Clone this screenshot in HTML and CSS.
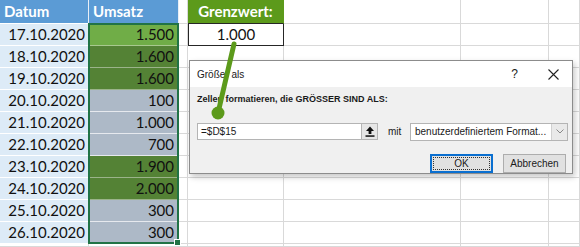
FILE: index.html
```html
<html>
  <head>
    <title>Größer als</title>
    <link rel="stylesheet" href="styles.css">
  </head>
  <body>
    <div class="sheet">
      <div class="cell head">Datum</div>
      <div class="cell head">Umsatz</div>
      <div class="cell"></div>
      <div class="cell head-green">Grenzwert:</div>
      <div class="cell"></div>
      <div class="cell"></div>
      <div class="cell"></div>

      <div class="cell date">17.10.2020</div>
      <div class="cell amount light">1.500</div>
      <div class="cell"></div>
      <div class="cell limit">1.000</div>
      <div class="cell"></div>
      <div class="cell"></div>
      <div class="cell"></div>

      <div class="cell date">18.10.2020</div>
      <div class="cell amount dark">1.600</div>
      <div class="cell"></div><div class="cell"></div><div class="cell"></div><div class="cell"></div><div class="cell"></div>

      <div class="cell date">19.10.2020</div>
      <div class="cell amount dark">1.600</div>
      <div class="cell"></div><div class="cell"></div><div class="cell"></div><div class="cell"></div><div class="cell"></div>

      <div class="cell date">20.10.2020</div>
      <div class="cell amount gray">100</div>
      <div class="cell"></div><div class="cell"></div><div class="cell"></div><div class="cell"></div><div class="cell"></div>

      <div class="cell date">21.10.2020</div>
      <div class="cell amount gray">1.000</div>
      <div class="cell"></div><div class="cell"></div><div class="cell"></div><div class="cell"></div><div class="cell"></div>

      <div class="cell date">22.10.2020</div>
      <div class="cell amount gray">700</div>
      <div class="cell"></div><div class="cell"></div><div class="cell"></div><div class="cell"></div><div class="cell"></div>

      <div class="cell date">23.10.2020</div>
      <div class="cell amount dark">1.900</div>
      <div class="cell"></div><div class="cell"></div><div class="cell"></div><div class="cell"></div><div class="cell"></div>

      <div class="cell date">24.10.2020</div>
      <div class="cell amount dark">2.000</div>
      <div class="cell"></div><div class="cell"></div><div class="cell"></div><div class="cell"></div><div class="cell"></div>

      <div class="cell date">25.10.2020</div>
      <div class="cell amount gray">300</div>
      <div class="cell"></div><div class="cell"></div><div class="cell"></div><div class="cell"></div><div class="cell"></div>

      <div class="cell date">26.10.2020</div>
      <div class="cell amount gray">300</div>
      <div class="cell"></div><div class="cell"></div><div class="cell"></div><div class="cell"></div><div class="cell"></div>

      <div class="cell"></div><div class="cell"></div><div class="cell"></div><div class="cell"></div><div class="cell"></div><div class="cell"></div><div class="cell"></div>

      <div class="selection"></div>
    </div>

    <div class="dialog">
      <div class="title-bar">
        <span class="title">Größer als</span>
        <span class="help">?</span>
        <svg class="close" width="11" height="11" viewBox="0 0 11 11">
          <path d="M0.5 0.5 L10.5 10.5 M10.5 0.5 L0.5 10.5" stroke="#222" stroke-width="1.1" fill="none"/>
        </svg>
      </div>
      <div class="dialog-body">
        <div class="prompt">Zellen formatieren, die GRÖSSER SIND ALS:</div>
        <div class="input-row">
          <div class="ref-input">=$D$15</div>
          <div class="ref-button">
            <svg width="10" height="11" viewBox="0 0 10 11">
              <path d="M5 0.5 L9 5 L6.4 5 L6.4 8 L3.6 8 L3.6 5 L1 5 Z" fill="#111"/>
              <rect x="0.5" y="9.3" width="9" height="1.5" fill="#111"/>
            </svg>
          </div>
          <span class="with">mit</span>
          <div class="format-select">
            <span class="format-text">benutzerdefiniertem Format...</span>
            <span class="format-arrow">
              <svg width="8" height="5" viewBox="0 0 8 5">
                <path d="M0.5 0.5 L4 4 L7.5 0.5" stroke="#888" stroke-width="1" fill="none"/>
              </svg>
            </span>
          </div>
        </div>
        <div class="button-row">
          <button class="btn btn-ok"><span class="focus">OK</span></button>
          <button class="btn">Abbrechen</button>
        </div>
      </div>
    </div>

    <svg class="pointer" width="580" height="247" viewBox="0 0 580 247">
      <line x1="234" y1="44" x2="218" y2="113" stroke="#5c9a1b" stroke-width="5" stroke-linecap="round"/>
      <circle cx="218" cy="113" r="6.5" fill="#5c9a1b"/>
    </svg>
  </body>
</html>
```

FILE: styles.css
```css
/* Sheet */
body {
  margin: 0;
  width: 580px;
  height: 247px;
  overflow: hidden;
  background-color: white;
  font-family: Lato, "Liberation Sans", sans-serif;
}

.sheet {
  position: relative;
  display: grid;
  grid-template-columns: 89px 90px 9px 96px 177px 88px 1fr;
  grid-template-rows: 24px repeat(10, 22px) 3px;
  font-size: 15px;
  color: #111;
}

.cell {
  box-sizing: border-box;
  border-right: 1px solid #d9d9d9;
  border-bottom: 1px solid #d9d9d9;
  line-height: 21px;
  white-space: nowrap;
  overflow: hidden;
}

.head {
  background-color: #5b9bd5;
  color: white;
  font-weight: bold;
  padding-left: 4px;
  line-height: 23px;
  border-right-color: #e8eef6;
  border-bottom-color: #ffffff;
}

.head-green {
  background-color: #5c9a1b;
  color: white;
  font-weight: bold;
  text-align: center;
  line-height: 23px;
  border-right-color: #5c9a1b;
  border-bottom-color: #262626;
}

.date {
  background-color: #ddebf7;
  text-align: right;
  padding-right: 3px;
  border-color: #ffffff;
}

.limit {
  text-align: center;
  border-left: 1px solid #262626;
  border-right: 1px solid #262626;
  border-bottom: 1px solid #262626;
}

/* Umsatz column, selected */
.amount {
  text-align: right;
  padding-right: 4px;
  border-color: #e6e9ee;
}

.light {
  background-color: #70ad47;
  border-bottom-color: #a8c98e;
}

.dark {
  background-color: #548235;
  border-bottom-color: #9bb38a;
}

.gray {
  background-color: #adb9c7;
}

.selection {
  position: absolute;
  left: 88px;
  top: 23px;
  width: 91px;
  height: 221px;
  box-sizing: border-box;
  border: 2px solid #217346;
}

.selection::after {
  content: "";
  position: absolute;
  right: -4px;
  bottom: -4px;
  width: 5px;
  height: 5px;
  background-color: #217346;
  border: 1px solid white;
}

/* Dialog */
.dialog {
  position: absolute;
  left: 189px;
  top: 60px;
  width: 384px;
  height: 114px;
  box-sizing: border-box;
  border: 1px solid #8c8c8c;
  background-color: #f0f0f0;
  box-shadow: 2px 3px 6px rgba(0, 0, 0, 0.22);
  font-family: "Liberation Sans", Arial, sans-serif;
  font-size: 10px;
  color: #1a1a1a;
  display: flex;
  flex-direction: column;
}

.title-bar {
  height: 27px;
  background-color: white;
  display: flex;
  align-items: center;
  padding-left: 7px;
}

.title {
  flex: 1;
}

.help {
  font-size: 12px;
  margin-right: 30px;
}

.close {
  margin-right: 13px;
}

.dialog-body {
  flex: 1;
  padding: 0 4px 0 7px;
  display: flex;
  flex-direction: column;
}

.prompt {
  font-weight: bold;
  font-size: 9px;
  margin-top: 6px;
  height: 12px;
  line-height: 12px;
}

.input-row {
  display: flex;
  align-items: center;
  margin-top: 18px;
  height: 17px;
}

.ref-input {
  box-sizing: border-box;
  width: 165px;
  height: 17px;
  background-color: white;
  border: 1px solid #b4b4b4;
  padding-left: 3px;
  line-height: 15px;
}

.ref-button {
  box-sizing: border-box;
  width: 16px;
  height: 17px;
  background-color: #e6e6e6;
  border: 1px solid #b4b4b4;
  border-left: none;
  display: flex;
  align-items: center;
  justify-content: center;
}

.with {
  margin-left: 10px;
  width: 22px;
}

.format-select {
  box-sizing: border-box;
  width: 158px;
  height: 18px;
  background-color: white;
  border: 1px solid #b4b4b4;
  display: flex;
  align-items: center;
}

.format-text {
  flex: 1;
  padding-left: 4px;
}

.format-arrow {
  width: 15px;
  height: 16px;
  background-color: #e9e9e9;
  border-left: 1px solid #d0d0d0;
  display: flex;
  align-items: center;
  justify-content: center;
}

.button-row {
  display: flex;
  justify-content: flex-end;
  gap: 10px;
  margin-top: 14px;
  padding-right: 2px;
}

.btn {
  box-sizing: border-box;
  width: 63px;
  height: 19px;
  padding: 0;
  font-family: "Liberation Sans", Arial, sans-serif;
  font-size: 10px;
  color: #1a1a1a;
  background-color: #e1e1e1;
  border: 1px solid #adadad;
}

.btn-ok {
  border: 2px solid #0a6fd0;
  padding: 1px;
}

.focus {
  display: block;
  height: 100%;
  box-sizing: border-box;
  border: 1px dotted #333;
  line-height: 11px;
}

/* Green pointer */
.pointer {
  position: absolute;
  left: 0;
  top: 0;
}
```
